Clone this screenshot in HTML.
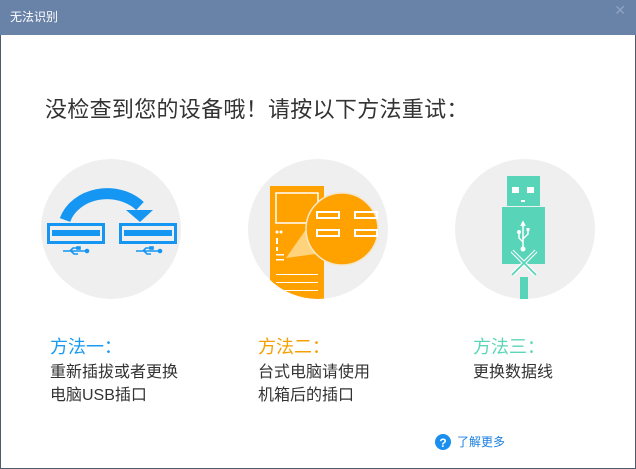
<!DOCTYPE html>
<html><head><meta charset="utf-8"><style>
*{margin:0;padding:0;box-sizing:border-box}
body{width:636px;height:469px;overflow:hidden;background:#fff;font-family:"Liberation Sans","Noto Sans CJK SC",sans-serif;position:relative}
.win{position:absolute;left:0;top:0;width:636px;height:469px;border:1px solid #4d5d6e;border-top:none}
.bar{position:absolute;left:0;top:0;width:636px;height:35px;background:#6983a8;color:#fff;font-size:12px;line-height:35px;padding-left:10px}
.x{position:absolute;right:10px;top:0;color:#8ea3c2;font-size:14px;line-height:20px}
.t{position:absolute;font-size:16px;color:#333;line-height:23px}
.h{position:absolute;font-size:18px;line-height:20px}
</style></head><body>
<div class="win"></div>
<div class="bar">无法识别<span class="x">✕</span></div>
<div style="position:absolute;left:45px;top:96px;font-size:22px;letter-spacing:0.3px;color:#333;line-height:28px">没检查到您的设备哦！请按以下方法重试：</div>
<svg style="position:absolute;left:0;top:0" width="636" height="469">
<defs><clipPath id="c2"><circle cx="318" cy="229" r="70"/></clipPath></defs>
<circle cx="111" cy="229" r="70" fill="#efefef"/>
<circle cx="318" cy="229" r="70" fill="#efefef"/>
<circle cx="525" cy="229" r="70" fill="#efefef"/>
<path d="M65 220 A44 37 0 0 1 140 206" stroke="#1496f2" stroke-width="11" fill="none"/>
<path d="M126 210 L153 210 L140 222 Z" fill="#1496f2"/>
<rect x="48.5" y="224.5" width="55" height="18" fill="none" stroke="#1496f2" stroke-width="3"/>
<rect x="52" y="230" width="48" height="6" fill="#1496f2"/>
<rect x="120.5" y="224.5" width="55" height="18" fill="none" stroke="#1496f2" stroke-width="3"/>
<rect x="124" y="230" width="48" height="6" fill="#1496f2"/>
<g stroke="#1496f2" stroke-width="1.6" fill="#1496f2"><path d="M63 251h24M70 251l3-3h4M71 251l3 3h4" fill="none"/><circle cx="87" cy="251" r="1.5"/><rect x="77" y="247" width="3" height="2"/></g>
<g stroke="#1496f2" stroke-width="1.6" fill="#1496f2"><path d="M136 251h24M143 251l3-3h4M144 251l3 3h4" fill="none"/><circle cx="160" cy="251" r="1.5"/><rect x="150" y="247" width="3" height="2"/></g>
<g clip-path="url(#c2)">
<rect x="270" y="186" width="54" height="120" fill="#ffa200"/>
<rect x="276" y="193" width="42" height="30" fill="none" stroke="#fff" stroke-width="1.5"/>
<circle cx="277" cy="232" r="1.5" fill="#fff"/><circle cx="281" cy="232" r="1.5" fill="#fff"/>
<rect x="276" y="238" width="2" height="6" fill="#fff"/><rect x="276" y="247" width="2" height="4" fill="#fff"/>
<rect x="276" y="254" width="8" height="1.5" fill="#fff"/><rect x="276" y="259" width="8" height="1.5" fill="#fff"/>
<rect x="276" y="274" width="42" height="1" fill="#fff"/><rect x="276" y="282" width="42" height="1" fill="#fff"/><rect x="276" y="290" width="42" height="1" fill="#fff"/>
<path d="M286 258 L316 215 L345 250 Z" fill="#ffd88a" opacity="0.9"/>
</g>
<circle cx="342" cy="229" r="36" fill="#ffa200" stroke="#f3e6cc" stroke-width="1.5"/>
<g fill="none" stroke="#fff" stroke-width="2"><rect x="317" y="212" width="22" height="6"/><rect x="355" y="212" width="22" height="6"/><rect x="317" y="230" width="22" height="6"/><rect x="355" y="230" width="22" height="6"/></g>
<rect x="507" y="176" width="33" height="30" fill="#58d5b8"/>
<rect x="512" y="187" width="7" height="6" fill="#fff"/><rect x="527" y="187" width="7" height="6" fill="#fff"/><rect x="521" y="200" width="4" height="2" fill="#fff"/>
<rect x="502" y="207" width="43" height="57" fill="#58d5b8"/>
<g stroke="#fff" stroke-width="1.5" fill="none"><path d="M523 222v28M521 226l2-4 2 4M519 233v5l4 4M528 230v4l-5 5"/></g>
<circle cx="519" cy="232" r="2" fill="#fff"/><rect x="526.5" y="228" width="3" height="3" fill="#fff"/><circle cx="523" cy="249" r="2.5" fill="#fff"/>
<g stroke="#fff" stroke-width="4"><path d="M512 251l24 24M536 251l-24 24"/></g>
<g stroke="#58d5b8" stroke-width="1.8"><path d="M512 251l24 24M536 251l-24 24"/></g>
<rect x="520" y="277" width="8" height="22" fill="#58d5b8"/>
<circle cx="443" cy="442" r="8" fill="#1a8ff0"/>
<text x="443" y="447" font-size="12" fill="#fff" text-anchor="middle" font-family="Liberation Sans" font-weight="bold">?</text>
</svg>
<div class="h" style="left:50px;top:337px;color:#1a9af0">方法一：</div>
<div class="t" style="left:50px;top:361px">重新插拔或者更换<br>电脑USB插口</div>
<div class="h" style="left:258px;top:337px;color:#f5a000">方法二：</div>
<div class="t" style="left:258px;top:361px">台式电脑请使用<br>机箱后的插口</div>
<div class="h" style="left:473px;top:337px;color:#5dd5b8">方法三：</div>
<div class="t" style="left:473px;top:361px">更换数据线</div>
<div style="position:absolute;left:457px;top:433px;font-size:12px;color:#1a7fe0;line-height:18px">了解更多</div>
</body></html>
